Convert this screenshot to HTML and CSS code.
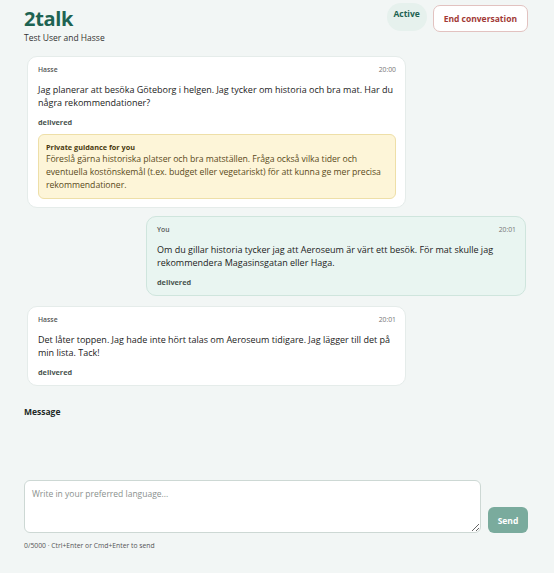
FILE: index.html
```html
<!DOCTYPE html>
<html lang="sv">
<head>
<meta charset="utf-8">
<link rel="stylesheet" href="styles.css">
</head>
<body>
<div class="page">
  <header class="header">
    <div class="brand">
      <h1 class="title">2talk</h1>
      <div class="subtitle">Test User and Hasse</div>
    </div>
    <div class="actions">
      <span class="badge">Active</span>
      <button class="end-btn">End conversation</button>
    </div>
  </header>

  <div class="messages">
    <div class="msg msg-other">
      <div class="msg-head"><span class="sender">Hasse</span><span class="time">20:00</span></div>
      <p class="msg-text">Jag planerar att besöka Göteborg i helgen. Jag tycker om historia och bra mat. Har du några rekommendationer?</p>
      <div class="status">delivered</div>
      <div class="guidance">
        <div class="guidance-title">Private guidance for you</div>
        <p class="guidance-text">Föreslå gärna historiska platser och bra matställen. Fråga också vilka tider och eventuella kostönskemål (t.ex. budget eller vegetariskt) för att kunna ge mer precisa rekommendationer.</p>
      </div>
    </div>

    <div class="msg msg-own">
      <div class="msg-head"><span class="sender">You</span><span class="time">20:01</span></div>
      <p class="msg-text">Om du gillar historia tycker jag att Aeroseum är värt ett besök. För mat skulle jag rekommendera Magasinsgatan eller Haga.</p>
      <div class="status">delivered</div>
    </div>

    <div class="msg msg-other">
      <div class="msg-head"><span class="sender">Hasse</span><span class="time">20:01</span></div>
      <p class="msg-text">Det låter toppen. Jag hade inte hört talas om Aeroseum tidigare. Jag lägger till det på min lista. Tack!</p>
      <div class="status">delivered</div>
    </div>
  </div>

  <div class="composer">
    <label class="composer-label" for="msg">Message</label>
    <div class="composer-row">
      <textarea id="msg" class="input" placeholder="Write in your preferred language..."></textarea>
      <button class="send-btn">Send</button>
    </div>
    <div class="hint">0/5000 · Ctrl+Enter or Cmd+Enter to send</div>
  </div>
</div>
</body>
</html>
```
FILE: styles.css
```css
* { box-sizing: border-box; }
html, body { margin: 0; padding: 0; }
body {
  background: #f2f6f5;
  font-family: "Open Sans", "Noto Sans", sans-serif;
  color: #1f2a27;
}
.page {
  width: 554px;
  padding: 5px 26px 0 24px;
}
.header {
  display: flex;
  justify-content: space-between;
  align-items: flex-start;
}
.title {
  margin: 2px 0 0 0;
  font-size: 20px;
  line-height: 24px;
  font-weight: 700;
  color: #1e6352;
  letter-spacing: -0.3px;
}
.subtitle {
  margin-top: 1px;
  font-size: 8.5px;
  color: #333;
}
.actions {
  display: flex;
  gap: 6px;
  align-items: flex-start;
}
.badge {
  display: block;
  width: 40px;
  height: 28px;
  margin-top: -2px;
  border-radius: 14px;
  background: #e6f1ed;
  color: #1e6352;
  font-weight: 700;
  font-size: 8.5px;
  text-align: center;
  padding-top: 5px;
}
.end-btn {
  height: 27px;
  padding: 0 10px;
  border: 1px solid #e2c2c0;
  border-radius: 7px;
  background: #fff;
  color: #a23a36;
  font-family: inherit;
  font-weight: 700;
  font-size: 8.5px;
}
.messages {
  display: flex;
  flex-direction: column;
  gap: 8px;
  margin-top: 13px;
}
.msg {
  width: 380px;
  border-radius: 10px;
  padding: 8px 9px 8px 10px;
  border: 1px solid #e5ecea;
}
.msg-other {
  background: #fff;
  margin-left: 3px;
  width: 379px;
}
.msg-own {
  background: #e9f5f1;
  border-color: #cfe5dd;
  align-self: flex-end;
  margin-right: 2px;
}
.msg-own + .msg-other { margin-top: 2px; }
.msg-head {
  display: flex;
  justify-content: space-between;
  font-size: 6.8px;
  color: #555;
  line-height: 10px;
}
.sender { font-weight: 600; }
.time { color: #777; }
.msg-text {
  margin: 9px 0 0 0;
  font-size: 9px;
  line-height: 12.5px;
  color: #222;
}
.status {
  margin-top: 8px;
  font-size: 7.3px;
  font-weight: 700;
  color: #4a5550;
  line-height: 10px;
}
.guidance {
  margin-top: 7px;
  background: #fdf5d8;
  border: 1px solid #eedfa8;
  border-radius: 6px;
  padding: 7px 4px 6px 7px;
}
.guidance-title {
  font-size: 7.3px;
  font-weight: 700;
  color: #4a3a10;
  line-height: 10px;
}
.guidance-text {
  margin: 1px 0 0 0;
  font-size: 8.7px;
  letter-spacing: -0.05px;
  line-height: 13px;
  color: #5a4a1a;
}
.composer {
  margin-top: 20px;
}
.composer-label {
  display: block;
  font-size: 8.5px;
  font-weight: 700;
  color: #1f2a27;
}
.composer-row {
  display: flex;
  align-items: flex-end;
  gap: 7px;
  margin-top: 63px;
}
.input {
  flex: none;
  width: 457px;
  height: 53px;
  border: 1px solid #cdd8d4;
  border-radius: 6px;
  padding: 7px 7px;
  font-family: inherit;
  font-size: 8.5px;
  resize: vertical;
  background: #fff;
}
.input::placeholder { color: #8a918e; }
.send-btn {
  flex: none;
  width: 40px;
  height: 26px;
  border: none;
  border-radius: 6px;
  background: #7aab9d;
  color: #fff;
  font-family: inherit;
  font-weight: 700;
  font-size: 8.5px;
}
.hint {
  margin-top: 8px;
  font-size: 6.8px;
  color: #555;
}
```
